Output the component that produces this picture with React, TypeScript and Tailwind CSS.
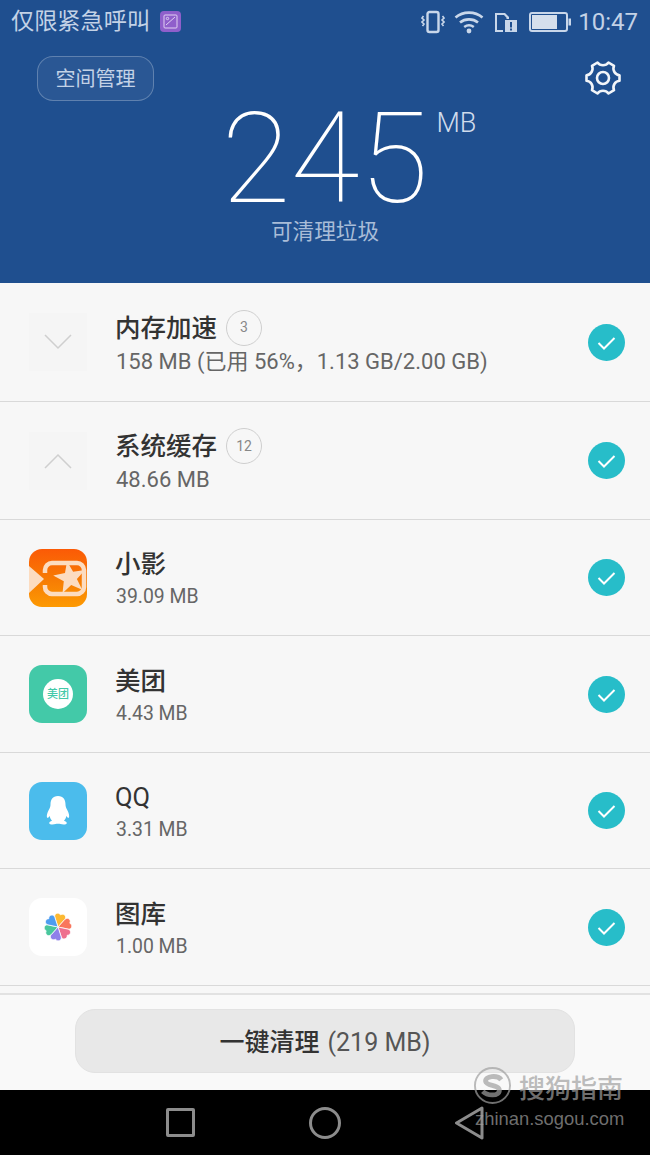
import React from "react";

const sans = "font-['Roboto','Noto_Sans_CJK_SC',sans-serif]";

const Check = () => (
  <svg width="37" height="37" viewBox="0 0 37 37" className="shrink-0">
    <circle cx="18.5" cy="18.5" r="18.5" fill="#27bdc9" />
    <path d="M10.5 19 l5.5 5.5 l10.5 -10.5" fill="none" stroke="#fff" strokeWidth="2" />
  </svg>
);

const Chevron = ({ up }: { up?: boolean }) => (
  <div className="w-[58px] h-[58px] bg-[#f5f5f5] flex items-center justify-center shrink-0">
    <svg width="28" height="16" viewBox="0 0 28 16">
      <path
        d={up ? "M1 15 L14 2 L27 15" : "M1 1 L14 14 L27 1"}
        fill="none"
        stroke="#cfcfcf"
        strokeWidth="1.5"
      />
    </svg>
  </div>
);

// five pointed star, tilted like the one in the logo
const starPoints = Array.from({ length: 10 }, (_, i) => {
  const r = i % 2 === 0 ? 17 : 7;
  const a = ((i * 36 - 100) * Math.PI) / 180;
  return `${(41 + r * Math.cos(a)).toFixed(1)},${(29 + r * Math.sin(a)).toFixed(1)}`;
}).join(" ");

const XiaoyingIcon = () => (
  <svg width="58" height="58" viewBox="0 0 58 58" className="shrink-0">
    <defs>
      <linearGradient id="xy" x1="0" y1="0" x2="0" y2="1">
        <stop offset="0" stopColor="#fb5a06" />
        <stop offset="0.55" stopColor="#f77d04" />
        <stop offset="1" stopColor="#fd9a03" />
      </linearGradient>
    </defs>
    <rect width="58" height="58" rx="13" fill="url(#xy)" />
    <path d="M0 17 L15 30 L0 44 Z" fill="#fcdcc0" />
    <path
      d="M16 24 V21 a7 7 0 0 1 7 -7 H48 a7 7 0 0 1 7 7 V38 a7 7 0 0 1 -7 7 H23 a7 7 0 0 1 -7 -7 V36"
      fill="none"
      stroke="#fcdcc0"
      strokeWidth="4.5"
    />
    <polygon points={starPoints} fill="#fcdcc0" />
  </svg>
);

const MeituanIcon = () => (
  <div className="w-[58px] h-[58px] rounded-[13px] bg-[#43c9a8] flex items-center justify-center shrink-0">
    <div className="w-[30px] h-[30px] rounded-full bg-white flex items-center justify-center text-[11px] font-medium leading-none text-[#43c9a8]">
      美团
    </div>
  </div>
);

const QQIcon = () => (
  <div className="w-[58px] h-[58px] rounded-[13px] bg-[#4bbcec] flex items-center justify-center shrink-0">
    <svg width="26" height="29" viewBox="0 0 26 29">
      <path
        d="M13 0 C7.5 0 5.5 4 5.5 8.5 C5.5 10.5 5 11.5 4 13.5 C2 17 1.5 20 2 21.5 C2.6 22.6 4 21 4.7 20 C5 22 6 23.8 7 24.7 C5.5 25.3 4 26 4.2 27.3 C4.5 28.7 8.5 28.8 10.5 28 C11.5 27.6 14.5 27.6 15.5 28 C17.5 28.8 21.5 28.7 21.8 27.3 C22 26 20.5 25.3 19 24.7 C20 23.8 21 22 21.3 20 C22 21 23.4 22.6 24 21.5 C24.5 20 24 17 22 13.5 C21 11.5 20.5 10.5 20.5 8.5 C20.5 4 18.5 0 13 0 Z"
        fill="#fff"
      />
    </svg>
  </div>
);

const petals = ["#fcb933", "#f9765c", "#ee6f8e", "#8f80ea", "#49c79d", "#4d9df0"];

const GalleryIcon = () => (
  <div className="w-[58px] h-[58px] rounded-[13px] bg-white flex items-center justify-center shrink-0">
    <svg width="32" height="32" viewBox="0 0 32 32">
      {petals.map((c, i) => (
        <path
          key={c}
          transform={`rotate(${i * 60 + 12} 16 16)`}
          d="M16 16 L10.8 7 C9.2 3.6 13.4 0.8 16 3.6 C18.6 0.8 22.8 3.6 21.2 7 Z"
          fill={c}
          stroke="#fff"
          strokeWidth="0.7"
        />
      ))}
    </svg>
  </div>
);

const rows = [
  { h: "h-[119px]", title: "内存加速", sub: "158 MB (已用 56%，1.13 GB/2.00 GB)", badge: "3", icon: <Chevron /> },
  { h: "h-[118px]", title: "系统缓存", sub: "48.66 MB", badge: "12", icon: <Chevron up /> },
  { h: "h-[116px]", title: "小影", sub: "39.09 MB", icon: <XiaoyingIcon /> },
  { h: "h-[117px]", title: "美团", sub: "4.43 MB", icon: <MeituanIcon /> },
  { h: "h-[116px]", title: "QQ", sub: "3.31 MB", icon: <QQIcon /> },
  { h: "h-[117px]", title: "图库", sub: "1.00 MB", icon: <GalleryIcon /> },
];

const StatusIcons = () => (
  <div className="flex items-center">
    {/* vibrate */}
    <svg width="24" height="24" viewBox="0 0 24 24" fill="none" stroke="#c9d7ea" className="mr-[9px]">
      <rect x="6.5" y="2" width="11" height="20" rx="2" strokeWidth="2.4" />
      <path d="M2.5 6 l-1.5 2 l2 2 l-2 2 l2 2 l-1.5 2 M21.5 6 l1.5 2 l-2 2 l2 2 l-2 2 l1.5 2" strokeWidth="1.6" />
    </svg>
    {/* wifi */}
    <svg width="30" height="24" viewBox="0 0 30 24" fill="none" stroke="#c9d7ea" strokeWidth="2.6" className="mr-[10px]">
      <path d="M1.5 7.5 C9 1 21 1 28.5 7.5" />
      <path d="M6 12.5 C11 8.3 19 8.3 24 12.5" />
      <path d="M10.2 17 C13 15 17 15 19.8 17" />
      <circle cx="15" cy="21" r="2.4" fill="#c9d7ea" stroke="none" />
    </svg>
    {/* sim */}
    <svg width="24" height="24" viewBox="0 0 24 24" className="mr-[11px]">
      <path d="M1 3 H11 L15 7 V9 H12.5 V7.8 L10 5 H3 V20 H9 V22 H1 Z" fill="#c9d7ea" />
      <rect x="11" y="10" width="12" height="12" fill="#c9d7ea" />
      <rect x="16" y="12" width="2" height="5.5" fill="#1f4f8f" />
      <rect x="16" y="18.5" width="2" height="2" fill="#1f4f8f" />
    </svg>
    {/* battery */}
    <svg width="42" height="22" viewBox="0 0 42 22" className="mr-[7px]">
      <rect x="1" y="2" width="37" height="18" rx="2" fill="none" stroke="#c9d7ea" strokeWidth="2" />
      <rect x="3" y="4" width="25" height="14" fill="#d5dfec" />
      <rect x="39.5" y="7.5" width="2.5" height="7" fill="#c9d7ea" />
    </svg>
  </div>
);

const Gear = () => (
  <svg width="38" height="38" viewBox="0 0 38 38" fill="none" stroke="#f2f5f9" strokeWidth="2.6" strokeLinejoin="round">
    <path d="M13.5 3.5 C15 5.5 16.8 6.3 19 6.3 C21.2 6.3 23 5.5 24.5 3.5 L30 6.8 C29 9.2 29.2 11 30.4 13 C31.5 14.9 33 15.9 35.5 16.2 V21.8 C33 22.1 31.5 23.1 30.4 25 C29.2 27 29 28.8 30 31.2 L24.5 34.5 C23 32.5 21.2 31.7 19 31.7 C16.8 31.7 15 32.5 13.5 34.5 L8 31.2 C9 28.8 8.8 27 7.6 25 C6.5 23.1 5 22.1 2.5 21.8 V16.2 C5 15.9 6.5 14.9 7.6 13 C8.8 11 9 9.2 8 6.8 Z" />
    <circle cx="19" cy="19" r="6" />
  </svg>
);

export default function App() {
  return (
    <div className={`w-[650px] h-[1155px] relative overflow-hidden flex flex-col bg-[#f7f7f7] ${sans}`}>
      <div className="h-[283px] shrink-0 bg-[#1f4f8f] flex flex-col">
        <div className="h-[44px] flex items-center justify-between pl-[11px] pr-[12px]">
          <div className="flex items-center gap-[10px]">
            <span className="text-[23.2px] leading-none text-[#c3d2e6]">仅限紧急呼叫</span>
            <svg width="21" height="21" viewBox="0 0 21 21">
              <rect width="21" height="21" rx="4" fill="#8f5fcb" />
              <rect x="4" y="4" width="13" height="13" rx="1" fill="none" stroke="#e0d0f2" />
              <path d="M6 14 L15 6" stroke="#e0d0f2" />
              <circle cx="7.5" cy="7.5" r="1.2" fill="none" stroke="#e0d0f2" />
            </svg>
          </div>
          <div className="flex items-center">
            <StatusIcons />
            <span className="text-[24px] leading-none text-[#c3d2e6]">10:47</span>
          </div>
        </div>
        <div className="h-[56px] mt-[12px] pl-[37px] pr-[28px] flex items-start justify-between">
          <div className="w-[117px] h-[45px] rounded-[16px] border border-white/25 bg-white/5 flex items-center justify-center text-[20px] text-[#c3d2e6]">
            空间管理
          </div>
          <div className="mt-[3px]">
            <Gear />
          </div>
        </div>
        <div className="flex justify-center">
          <div className="relative h-[110px] mt-[-8px]">
            <span className="block text-[126px] leading-[110px] font-thin text-white">245</span>
            <span className="absolute left-[100%] top-[6px] ml-[8px] text-[27px] leading-none text-[#d0dcec] font-light">
              MB
            </span>
          </div>
        </div>
        <div className="text-center text-[21.6px] leading-none text-[#a9bdd8] mt-[7px]">可清理垃圾</div>
      </div>

      <div className="flex-1 flex flex-col">
        {rows.map((r) => (
          <div
            key={r.title}
            className={`${r.h} shrink-0 border-b border-[#d9d9d9] flex items-center pl-[29px] pr-[25px]`}
          >
            {r.icon}
            <div className={`ml-[28px] flex-1 flex flex-col ${r.badge ? "pt-[2px]" : "pt-[3px]"}`}>
              <div className="flex items-center h-[36px]">
                <span
                  className={`text-[25.5px] leading-none text-[#333] ${r.title === "QQ" ? "font-normal" : "font-medium"}`}
                >
                  {r.title}
                </span>
                {r.badge && (
                  <span className="ml-[9px] mt-[-2px] w-[36px] h-[36px] rounded-full border border-[#cfcfcf] flex items-center justify-center text-[14px] text-[#888]">
                    {r.badge}
                  </span>
                )}
              </div>
              {r.badge ? (
                <span className="text-[22px] leading-[28px] ml-[1px] mt-[1px] text-[#666]">{r.sub}</span>
              ) : (
                <span className="text-[19.4px] leading-[28px] ml-[1px] text-[#666]">{r.sub}</span>
              )}
            </div>
            <Check />
          </div>
        ))}
      </div>

      <div className="h-[97px] shrink-0 bg-[#f9f9f9] border-t-2 border-[#e2e2e2] flex justify-center pt-[14px]">
        <div className="w-[500px] h-[64px] pt-[4px] rounded-[20px] bg-[#e8e8e8] border border-[#e2e2e2] flex items-center justify-center text-[25px] text-[#555]">
          <span className="text-[#333] font-medium">一键清理</span>
          <span className="ml-[8px]">(219 MB)</span>
        </div>
      </div>

      <div className="h-[65px] shrink-0 bg-black flex items-center pl-[166px]">
        <div className="w-[29px] h-[29px] border-[3px] border-[#8c8c8c] rounded-[2px]" />
        <div className="ml-[114px] w-[32px] h-[32px] border-[3px] border-[#8c8c8c] rounded-full" />
        <svg width="32" height="34" viewBox="0 0 32 34" className="ml-[113px]">
          <path d="M28 2 L2.5 17 L28 32 Z" fill="none" stroke="#8c8c8c" strokeWidth="3" strokeLinejoin="round" />
        </svg>
      </div>

      {/* sogou watermark */}
      <div className="absolute left-[473px] top-[1066px] w-[170px] text-[#a0a0a0]/70">
        <div className="flex items-center whitespace-nowrap">
          <svg width="39" height="39" viewBox="0 0 40 40" fill="none" stroke="#a0a0a0" strokeOpacity="0.7">
            <circle cx="20" cy="20" r="18" strokeWidth="2" />
            <path d="M29 14 C25 9 12 10 13 16 C14 21 27 19 27 25 C27 31 15 31 10 26" strokeWidth="5" />
          </svg>
          <span className="ml-[7px] mt-[7px] text-[26px] leading-none font-medium">搜狗指南</span>
        </div>
        <div className="ml-[2px] mt-[3px] text-[18.4px] leading-[22px] whitespace-nowrap font-['Liberation_Sans',sans-serif]">
          zhinan.sogou.com
        </div>
      </div>
    </div>
  );
}
